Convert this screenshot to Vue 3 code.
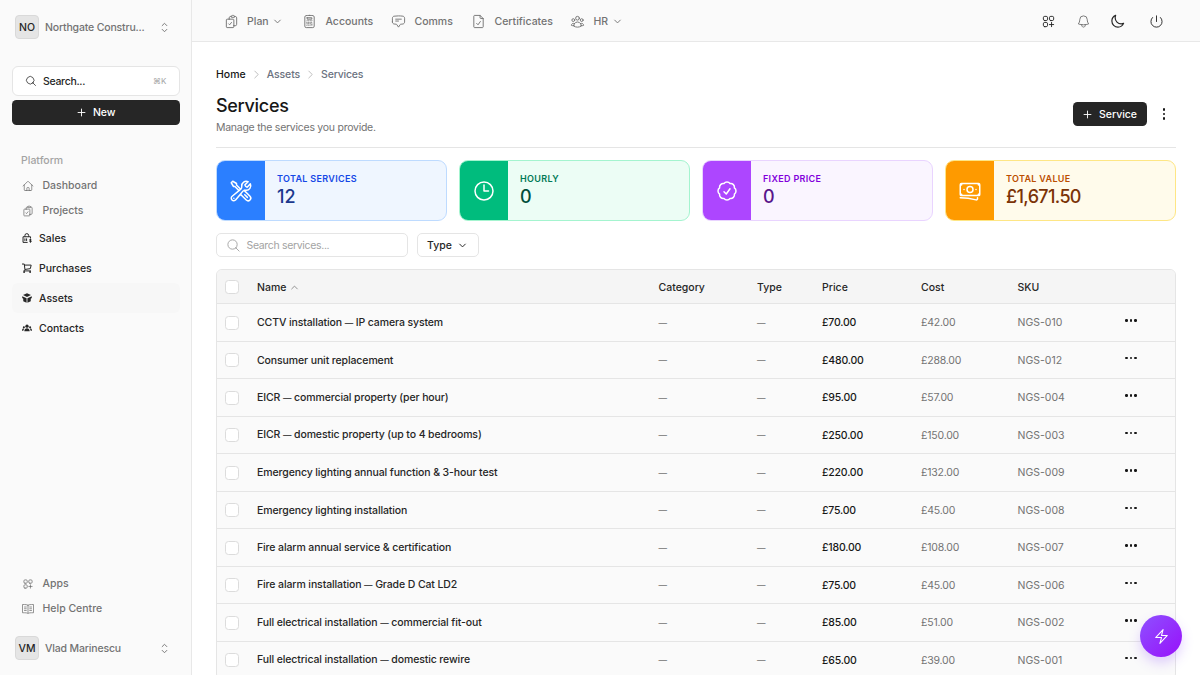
<template>
  <div class="app">
    <aside class="sidebar">
      <div class="profile team">
        <span class="avatar">NO</span>
        <span class="profile-name">Northgate Constru...</span>
        <svg class="icon updown" viewBox="0 0 24 24"><path :d="icons.upDown" /></svg>
      </div>

      <div class="side-search">
        <svg class="icon" viewBox="0 0 24 24"><path :d="icons.search" /></svg>
        <span class="side-search-text">Search...</span>
        <span class="kbd">⌘K</span>
      </div>
      <button class="btn-dark new-btn">
        <svg class="icon" viewBox="0 0 24 24"><path :d="icons.plus" /></svg>
        <span>New</span>
      </button>

      <div class="group-label">Platform</div>
      <nav class="links">
        <a v-for="link in platformLinks" :key="link.label" class="link">
          <svg class="icon" viewBox="0 0 24 24"><path :d="icons[link.icon]" /></svg>
          <span>{{ link.label }}</span>
        </a>
      </nav>

      <nav class="sections">
        <a v-for="item in sections" :key="item.label" :class="['section', { active: item.active }]">
          <svg v-if="item.icon === 'sales'" class="glyph" viewBox="0 0 24 24">
            <path class="line" d="M7 9V6a4.500 4.500 0 0 1 9 0V9M2.500 9h18v4M2.500 9v13.500h11M7 13v6M11 13v6" />
            <path class="line" d="M22.500 16.200c-.6-1.200-4.500-1.300-4.500.6 0 2 4.500.8 4.500 3 0 2-4 1.600-4.700.4M20.300 14v9" />
          </svg>
          <svg v-else-if="item.icon === 'cart'" class="glyph" viewBox="0 0 24 24">
            <path class="line" d="M0 2.500h5.500l1.500 13M6 5h16l-2 8.500L7 15.500M7 15.500l-2.500 3.500h17" />
            <circle cx="5" cy="21.500" r="2.300" /><circle cx="19.500" cy="21.500" r="2.300" />
          </svg>
          <svg v-else-if="item.icon === 'cube'" class="glyph" viewBox="0 0 24 24">
            <path d="M12 .5 2.500 5 12 9.500 21.500 5zM.5 7.500 11 12.700V23.500L3 19.500v-6L.5 12zM23.500 7.500 13 12.700V23.500L21 19.500v-6l2.500-1.500z" />
          </svg>
          <svg v-else class="glyph" viewBox="0 0 24 24">
            <circle cx="12" cy="7.500" r="4" /><circle cx="4.500" cy="10" r="2.500" /><circle cx="19.500" cy="10" r="2.500" />
            <path d="M5.500 20c0-9.500 13-9.500 13 0zM0 18.500c0-4.500 2-5.500 5.500-5-1.500 1.500-2.300 3-2.300 5zM24 18.500c0-4.500-2-5.500-5.500-5 1.500 1.500 2.300 3 2.300 5z" />
          </svg>
          <span>{{ item.label }}</span>
        </a>
      </nav>

      <nav class="links bottom-links">
        <a v-for="link in bottomLinks" :key="link.label" class="link">
          <svg class="icon" viewBox="0 0 24 24"><path :d="icons[link.icon]" /></svg>
          <span>{{ link.label }}</span>
        </a>
      </nav>
      <div class="profile">
        <span class="avatar">VM</span>
        <span class="profile-name">Vlad Marinescu</span>
        <svg class="icon updown" viewBox="0 0 24 24"><path :d="icons.upDown" /></svg>
      </div>
    </aside>

    <main class="main">
      <header class="topbar">
        <nav class="topnav">
          <a v-for="item in topNav" :key="item.label" :class="['top-item', item.icon]">
            <svg class="icon" viewBox="0 0 24 24"><path :d="icons[item.icon]" /></svg>
            <span>{{ item.label }}</span>
            <svg v-if="item.menu" class="chevron" viewBox="0 0 24 24"><path :d="icons.down" /></svg>
          </a>
        </nav>
        <div class="top-actions">
          <svg v-for="name in topActions" :key="name" :class="['icon', name]" viewBox="0 0 24 24"><path :d="icons[name]" /></svg>
        </div>
      </header>

      <div class="content">
        <div class="breadcrumbs">
          <span class="home-crumb">Home</span>
          <svg class="crumb-sep" viewBox="0 0 24 24"><path :d="icons.right" /></svg>
          <span>Assets</span>
          <svg class="crumb-sep" viewBox="0 0 24 24"><path :d="icons.right" /></svg>
          <span class="last-crumb">Services</span>
        </div>

        <div class="page-head">
          <div>
            <h1>Services</h1>
            <p>Manage the services you provide.</p>
          </div>
          <div class="head-actions">
            <button class="btn-dark service-btn">
              <svg class="icon" viewBox="0 0 24 24"><path :d="icons.plus" /></svg>
              <span>Service</span>
            </button>
            <span class="dots vertical"><i></i><i></i><i></i></span>
          </div>
        </div>

        <div class="stats">
          <div v-for="stat in stats" :key="stat.label" :class="['stat', stat.color]">
            <div class="stat-icon">
              <svg class="icon" viewBox="0 0 24 24"><path :d="icons[stat.icon]" /></svg>
            </div>
            <div class="stat-body">
              <div class="stat-label">{{ stat.label }}</div>
              <div class="stat-value">{{ stat.value }}</div>
            </div>
          </div>
        </div>

        <div class="filters">
          <div class="filter-search">
            <svg class="icon" viewBox="0 0 24 24"><path :d="icons.search" /></svg>
            <span>Search services...</span>
          </div>
          <button class="type-btn">
            <span>Type</span>
            <svg class="chevron" viewBox="0 0 24 24"><path :d="icons.down" /></svg>
          </button>
        </div>

        <div class="table">
          <div class="row head">
            <span class="check"></span>
            <span class="name-head">Name <svg class="chevron" viewBox="0 0 24 24"><path :d="icons.up" /></svg></span>
            <span>Category</span>
            <span>Type</span>
            <span>Price</span>
            <span>Cost</span>
            <span>SKU</span>
            <span></span>
          </div>
          <div v-for="service in services" :key="service.sku" class="row">
            <span class="check"></span>
            <span class="name">
              <template v-for="(part, index) in service.name.split('—')" :key="index"><span v-if="index" class="dash">—</span>{{ part }}</template>
            </span>
            <span class="muted"><span class="dash">—</span></span>
            <span class="muted"><span class="dash">—</span></span>
            <span class="price">{{ service.price }}</span>
            <span class="muted cost">{{ service.cost }}</span>
            <span class="muted">{{ service.sku }}</span>
            <span class="dots"><i></i><i></i><i></i></span>
          </div>
        </div>
      </div>
    </main>

    <button class="fab">
      <svg class="icon" viewBox="0 0 24 24"><path :d="icons.bolt" /></svg>
    </button>
  </div>
</template>

<script setup>
const icons = {
  search: 'm21 21-5.197-5.197m0 0A7.5 7.5 0 1 0 5.196 5.196a7.5 7.5 0 0 0 10.607 10.607Z',
  plus: 'M12 4.5v15m7.5-7.5h-15',
  upDown: 'M8.25 15 12 18.75 15.75 15m-7.5-6L12 5.25 15.75 9',
  up: 'm4.5 15.75 7.5-7.5 7.5 7.5',
  down: 'm19.5 8.25-7.5 7.5-7.5-7.5',
  right: 'm8.25 4.5 7.5 7.5-7.5 7.5',
  home: 'm2.25 12 8.954-8.955c.44-.439 1.152-.439 1.591 0L21.75 12M4.5 9.75v10.125c0 .621.504 1.125 1.125 1.125H9.75v-4.875c0-.621.504-1.125 1.125-1.125h2.25c.621 0 1.125.504 1.125 1.125V21h4.125c.621 0 1.125-.504 1.125-1.125V9.75M8.25 21h8.25',
  clipboard: 'M11.35 3.836c-.065.21-.1.433-.1.664 0 .414.336.75.75.75h4.5a.75.75 0 0 0 .75-.75 2.25 2.25 0 0 0-.1-.664m-5.8 0A2.251 2.251 0 0 1 13.5 2.25H15c1.012 0 1.867.668 2.15 1.586m-5.8 0c-.376.023-.75.05-1.124.08C9.095 4.01 8.25 4.973 8.25 6.108V8.25m8.9-4.414c.376.023.75.05 1.124.08 1.131.094 1.976 1.057 1.976 2.192V16.5A2.25 2.25 0 0 1 18 18.75h-2.25m-7.5-10.5H4.875c-.621 0-1.125.504-1.125 1.125v11.25c0 .621.504 1.125 1.125 1.125h9.75c.621 0 1.125-.504 1.125-1.125V18.75m-7.5-10.5h6.375c.621 0 1.125.504 1.125 1.125v9.375m-8.25-3 1.5 1.5 3-3.75',
  calculator: 'M15.75 15.75V18m-7.5-6.75h.008v.008H8.25v-.008Zm0 2.25h.008v.008H8.25V13.5Zm0 2.25h.008v.008H8.25v-.008Zm0 2.25h.008v.008H8.25V18Zm2.498-6.75h.007v.008h-.007v-.008Zm0 2.25h.007v.008h-.007V13.5Zm0 2.25h.007v.008h-.007v-.008Zm0 2.25h.007v.008h-.007V18Zm2.504-6.75h.008v.008h-.008v-.008Zm0 2.25h.008v.008h-.008V13.5Zm0 2.25h.008v.008h-.008v-.008Zm0 2.25h.008v.008h-.008V18Zm2.498-6.75h.008v.008h-.008v-.008Zm0 2.25h.008v.008h-.008V13.5ZM8.25 6h7.5v2.25h-7.5V6ZM12 2.25c-1.892 0-3.758.11-5.593.322C5.307 2.7 4.5 3.65 4.5 4.757V19.5a2.25 2.25 0 0 0 2.25 2.25h10.5a2.25 2.25 0 0 0 2.25-2.25V4.757c0-1.108-.806-2.057-1.907-2.185A48.507 48.507 0 0 0 12 2.25Z',
  chat: 'M7.5 8.25h9m-9 3H12m-9.75 1.51c0 1.6 1.123 2.994 2.707 3.227 1.129.166 2.27.293 3.423.379.35.026.67.21.865.501L12 21l2.755-4.133a1.14 1.14 0 0 1 .865-.501 48.172 48.172 0 0 0 3.423-.379c1.584-.233 2.707-1.626 2.707-3.228V6.741c0-1.602-1.123-2.995-2.707-3.228A48.394 48.394 0 0 0 12 3c-2.392 0-4.744.175-7.043.513C3.373 3.746 2.25 5.14 2.25 6.741v6.018Z',
  document: 'M14.5 2.25H5.625c-.621 0-1.125.504-1.125 1.125v17.25c0 .621.504 1.125 1.125 1.125h12.75c.621 0 1.125-.504 1.125-1.125V7.25l-5-5v3.875c0 .621.504 1.125 1.125 1.125H19.5M9 15l2.25 2.25L15 12',
  group: 'M18 18.72a9.094 9.094 0 0 0 3.741-.479 3 3 0 0 0-4.682-2.72m.94 3.198.001.031c0 .225-.012.447-.037.666A11.944 11.944 0 0 1 12 21c-2.17 0-4.207-.576-5.963-1.584A6.062 6.062 0 0 1 6 18.719m12 0a5.971 5.971 0 0 0-.941-3.197m0 0A5.995 5.995 0 0 0 12 12.75a5.995 5.995 0 0 0-5.058 2.772m0 0a3 3 0 0 0-4.681 2.72 8.986 8.986 0 0 0 3.74.477m.94-3.197a5.971 5.971 0 0 0-.94 3.197M15 6.75a3 3 0 1 1-6 0 3 3 0 0 1 6 0Zm6 3a2.25 2.25 0 1 1-4.5 0 2.25 2.25 0 0 1 4.5 0Zm-13.5 0a2.25 2.25 0 1 1-4.5 0 2.25 2.25 0 0 1 4.5 0Z',
  apps: 'M13.5 16.875h3.375m0 0h3.375m-3.375 0V13.5m0 3.375v3.375M6 10.5h2.25a2.25 2.25 0 0 0 2.25-2.25V6a2.25 2.25 0 0 0-2.25-2.25H6A2.25 2.25 0 0 0 3.75 6v2.25A2.25 2.25 0 0 0 6 10.5Zm0 9.75h2.25A2.25 2.25 0 0 0 10.5 18v-2.25a2.25 2.25 0 0 0-2.25-2.25H6a2.25 2.25 0 0 0-2.25 2.25V18A2.25 2.25 0 0 0 6 20.25Zm9.75-9.75H18a2.25 2.25 0 0 0 2.25-2.25V6A2.25 2.25 0 0 0 18 3.75h-2.25A2.25 2.25 0 0 0 13.5 6v2.25a2.25 2.25 0 0 0 2.25 2.25Z',
  book: 'M12 4.5C10.5 3 7 3 1 3v16.5c6 0 9.500 0 11 1.500C13.500 19.500 17 19.500 23 19.500V3c-6 0-9.500 0-11 1.500Zm0 0v16M5 8H8.500M5 11.500H8.500M5 15H8.500M15.500 8H19M15.500 11.500H19M15.500 15H19',
  bell: 'M14.857 17.082a23.848 23.848 0 0 0 5.454-1.31A8.967 8.967 0 0 1 18 9.75V9A6 6 0 0 0 6 9v.75a8.967 8.967 0 0 1-2.312 6.022c1.733.64 3.56 1.085 5.455 1.31m5.714 0a24.255 24.255 0 0 1-5.714 0m5.714 0a3 3 0 1 1-5.714 0',
  moon: 'M21.752 15.002A9.72 9.72 0 0 1 18 15.75c-5.385 0-9.75-4.365-9.75-9.75 0-1.33.266-2.597.748-3.752A9.753 9.753 0 0 0 3 11.25C3 16.635 7.365 21 12.75 21a9.753 9.753 0 0 0 9.002-5.998Z',
  power: 'M5.636 5.636a9 9 0 1 0 12.728 0M12 3v9',
  tools: 'M11.42 15.17 17.25 21A2.652 2.652 0 0 0 21 17.25l-5.877-5.877M11.42 15.17l2.496-3.03c.317-.384.74-.626 1.208-.766M11.42 15.17l-4.655 5.653a2.548 2.548 0 1 1-3.586-3.586l6.837-5.63m5.108-.233c.55-.164 1.163-.188 1.743-.14a4.5 4.5 0 0 0 4.486-6.336l-3.276 3.277a3.004 3.004 0 0 1-2.25-2.25l3.276-3.276a4.5 4.5 0 0 0-6.336 4.486c.091 1.076-.071 2.264-.904 2.95l-.102.085m-1.745 1.437L5.909 7.5H4.5L2.25 3.75l1.5-1.5L7.5 4.5v1.409l4.26 4.26m-1.745 1.437 1.745-1.437m6.615 8.206L15.75 15.75M4.867 19.125h.008v.008h-.008v-.008Z',
  clock: 'M12 6v6h4.5m4.5 0a9 9 0 1 1-18 0 9 9 0 0 1 18 0Z',
  badge: 'M9 12.75 11.25 15 15 9.75M21 12c0 1.268-.63 2.39-1.593 3.068a3.745 3.745 0 0 1-1.043 3.296 3.745 3.745 0 0 1-3.296 1.043A3.745 3.745 0 0 1 12 21c-1.268 0-2.39-.63-3.068-1.593a3.746 3.746 0 0 1-3.296-1.043 3.745 3.745 0 0 1-1.043-3.296A3.745 3.745 0 0 1 3 12c0-1.268.63-2.39 1.593-3.068a3.745 3.745 0 0 1 1.043-3.296 3.746 3.746 0 0 1 3.296-1.043A3.746 3.746 0 0 1 12 3c1.268 0 2.39.63 3.068 1.593a3.746 3.746 0 0 1 3.296 1.043 3.746 3.746 0 0 1 1.043 3.296A3.745 3.745 0 0 1 21 12Z',
  banknotes: 'M2.25 18.75a60.07 60.07 0 0 1 15.797 2.101c.727.198 1.453-.342 1.453-1.096V18.75M3.75 4.5v.75A.75.75 0 0 1 3 6h-.75m0 0v-.375c0-.621.504-1.125 1.125-1.125H20.25M2.25 6v9m18-10.5v.75c0 .414.336.75.75.75h.75m-1.5-1.5h.375c.621 0 1.125.504 1.125 1.125v9.75c0 .621-.504 1.125-1.125 1.125h-.375m1.5-1.5H21a.75.75 0 0 0-.75.75v.75m0 0H3.75m0 0h-.375a1.125 1.125 0 0 1-1.125-1.125V15m1.5 1.5v-.75A.75.75 0 0 0 3 15h-.75M15 10.5a3 3 0 1 1-6 0 3 3 0 0 1 6 0Zm3 0h.008v.008H18V10.5Zm-12 0h.008v.008H6V10.5Z',
  bolt: 'm3.75 13.5 10.5-11.25L12 10.5h8.25L9.75 21.75 12 13.5H3.75Z',
}

const platformLinks = [
  { label: 'Dashboard', icon: 'home' },
  { label: 'Projects', icon: 'clipboard' },
]

const sections = [
  { label: 'Sales', icon: 'sales' },
  { label: 'Purchases', icon: 'cart' },
  { label: 'Assets', icon: 'cube', active: true },
  { label: 'Contacts', icon: 'people' },
]

const bottomLinks = [
  { label: 'Apps', icon: 'apps' },
  { label: 'Help Centre', icon: 'book' },
]

const topNav = [
  { label: 'Plan', icon: 'clipboard', menu: true },
  { label: 'Accounts', icon: 'calculator' },
  { label: 'Comms', icon: 'chat' },
  { label: 'Certificates', icon: 'document' },
  { label: 'HR', icon: 'group', menu: true },
]

const topActions = ['apps', 'bell', 'moon', 'power']

const stats = [
  { label: 'TOTAL SERVICES', value: '12', icon: 'tools', color: 'blue' },
  { label: 'HOURLY', value: '0', icon: 'clock', color: 'green' },
  { label: 'FIXED PRICE', value: '0', icon: 'badge', color: 'purple' },
  { label: 'TOTAL VALUE', value: '£1,671.50', icon: 'banknotes', color: 'amber' },
]

const services = [
  { name: 'CCTV installation — IP camera system', price: '£70.00', cost: '£42.00', sku: 'NGS-010' },
  { name: 'Consumer unit replacement', price: '£480.00', cost: '£288.00', sku: 'NGS-012' },
  { name: 'EICR — commercial property (per hour)', price: '£95.00', cost: '£57.00', sku: 'NGS-004' },
  { name: 'EICR — domestic property (up to 4 bedrooms)', price: '£250.00', cost: '£150.00', sku: 'NGS-003' },
  { name: 'Emergency lighting annual function & 3-hour test', price: '£220.00', cost: '£132.00', sku: 'NGS-009' },
  { name: 'Emergency lighting installation', price: '£75.00', cost: '£45.00', sku: 'NGS-008' },
  { name: 'Fire alarm annual service & certification', price: '£180.00', cost: '£108.00', sku: 'NGS-007' },
  { name: 'Fire alarm installation — Grade D Cat LD2', price: '£75.00', cost: '£45.00', sku: 'NGS-006' },
  { name: 'Full electrical installation — commercial fit-out', price: '£85.00', cost: '£51.00', sku: 'NGS-002' },
  { name: 'Full electrical installation — domestic rewire', price: '£65.00', cost: '£39.00', sku: 'NGS-001' },
]
</script>

<style>
body {
  overflow: hidden;
}
</style>

<style scoped>
.app {
  display: flex;
  height: 675px;
  overflow: hidden;
  background: #fff;
  color: #262626;
  font: 500 10.5px/15px Inter, 'Liberation Sans', sans-serif;
}

button {
  border: 0;
  font: inherit;
  color: inherit;
}

.icon,
.chevron,
.crumb-sep {
  display: block;
  flex: none;
  width: 12px;
  height: 12px;
  fill: none;
  stroke: currentColor;
  stroke-width: 1.5;
  stroke-linecap: round;
  stroke-linejoin: round;
}

.sidebar {
  display: flex;
  flex-direction: column;
  flex: none;
  box-sizing: border-box;
  width: 192px;
  padding: 12px;
  border-right: 1px solid #e8e8e8;
  background: #fafafa;
}

.profile {
  display: flex;
  align-items: center;
  height: 30px;
  padding: 0 8px 0 3px;
  color: #737373;
}

.profile .updown {
  width: 15px;
  height: 15px;
  margin-right: -1px;
}

.team {
  margin-bottom: 24px;
}

.avatar {
  display: grid;
  place-items: center;
  box-sizing: border-box;
  width: 24px;
  height: 24px;
  margin-right: 6px;
  border: 1px solid #d9d9d9;
  border-radius: 4px;
  background: #e5e5e5;
  color: #262626;
}

.profile-name {
  flex: 1;
  letter-spacing: -0.16px;
}

.side-search {
  display: flex;
  align-items: center;
  box-sizing: border-box;
  width: 167.5px;
  height: 30px;
  margin-bottom: 4px;
  padding: 0 12px;
  border: 1px solid #e5e5e5;
  border-radius: 6px;
  background: #fff;
}

.side-search-text {
  flex: 1;
  margin-left: 6px;
  letter-spacing: -0.3px;
}

.kbd {
  color: #a3a3a3;
  font-size: 8px;
  font-weight: 400;
}

.btn-dark {
  display: flex;
  align-items: center;
  justify-content: center;
  height: 24px;
  padding: 0;
  border-radius: 4.5px;
  background: #262626;
  color: #fff;
}

.btn-dark .icon {
  width: 11px;
  height: 11px;
  stroke-width: 2;
}

.new-btn {
  flex: none;
  gap: 6px;
  width: 167.5px;
  height: 24.5px;
}

.group-label {
  margin: 28px 9px 5.5px;
  color: #a3a3a3;
  line-height: 15px;
}

.links {
  display: flex;
  flex-direction: column;
}

.link {
  display: flex;
  align-items: center;
  gap: 9px;
  height: 25px;
  padding-left: 9.5px;
  color: #737373;
}

.sections {
  display: flex;
  flex-direction: column;
}

.section {
  display: flex;
  align-items: center;
  gap: 7px;
  width: 158px;
  height: 30px;
  padding-left: 10px;
  border-radius: 6px;
}

.section.active {
  background: #f7f7f7;
}

.glyph {
  width: 10px;
  height: 10px;
  fill: #262626;
}

.glyph .line {
  fill: none;
  stroke: #262626;
  stroke-width: 2.4;
}

.bottom-links {
  margin-top: auto;
  margin-bottom: 12px;
}

.main {
  flex: 1;
  min-width: 0;
}

.topbar {
  display: flex;
  align-items: center;
  justify-content: space-between;
  box-sizing: border-box;
  height: 42px;
  padding: 1px 36px 0 31.5px;
  border-bottom: 1px solid #e8e8e8;
  background: #fafafa;
  color: #737373;
}

.topnav,
.top-item {
  display: flex;
  align-items: center;
}

.top-item .icon {
  width: 15px;
  height: 15px;
  margin-right: 8.5px;
}

.top-item .chevron {
  width: 9px;
  height: 9px;
  margin-left: 4.5px;
  stroke-width: 2.5;
}

.top-item.clipboard { width: 78.5px; }
.top-item.calculator { width: 89px; }
.top-item.chat { width: 80px; }
.top-item.document { width: 99px; }

.top-actions {
  display: flex;
  align-items: center;
  gap: 19.5px;
  color: #262626;
}

.top-actions .icon {
  width: 15px;
  height: 15px;
}

.top-actions .bell {
  color: #737373;
}

.top-actions .moon {
  margin-right: 4.5px;
  stroke-width: 1.9;
}

.content {
  padding: 24px 24px 0;
}

.breadcrumbs {
  display: flex;
  align-items: center;
  height: 16px;
  color: #6b7280;
  letter-spacing: -0.1px;
}

.home-crumb {
  color: #171717;
  letter-spacing: 0;
}

.last-crumb {
  letter-spacing: -0.2px;
}

.crumb-sep {
  width: 11px;
  height: 11px;
  margin: 0 5px;
  color: #a3a3a3;
}

.page-head {
  display: flex;
  justify-content: space-between;
  box-sizing: border-box;
  height: 66px;
  padding-top: 11px;
  border-bottom: 1px solid #e5e5e5;
}

h1 {
  margin: 0;
  color: #171717;
  font-size: 18px;
  font-weight: 450;
  line-height: 25px;
  letter-spacing: -0.3px;
}

.page-head p {
  margin: 2px 0 0;
  color: #737373;
  font-weight: 400;
  line-height: 16px;
  letter-spacing: -0.26px;
}

.head-actions {
  display: flex;
  align-items: center;
  align-self: flex-start;
  gap: 16px;
  margin-top: 9px;
  padding-right: 11px;
}

.service-btn {
  gap: 6px;
  width: 74px;
}

.dots {
  display: flex;
  align-items: center;
  gap: 2px;
}

.dots i {
  width: 2.5px;
  height: 2.5px;
  border-radius: 50%;
  background: #171717;
}

.dots.vertical {
  flex-direction: column;
  gap: 2px;
}

.stats {
  display: grid;
  grid-template-columns: repeat(4, 1fr);
  gap: 12px;
  margin-top: 12px;
}

.stat {
  display: flex;
  box-sizing: border-box;
  height: 61px;
  overflow: hidden;
  border: 1px solid;
  border-radius: 9px;
}

.stat-icon {
  display: grid;
  place-items: center;
  width: 48px;
  color: #fff;
}

.stat-icon .icon {
  width: 24px;
  height: 24px;
}

.stat-body {
  padding: 10px 12px 0;
}

.stat-label {
  font-size: 9px;
  font-weight: 600;
  line-height: 15px;
  letter-spacing: 0.33px;
}

.stat-value {
  font-size: 18px;
  font-weight: 450;
  line-height: 21px;
}

.blue { border-color: #bedbff; background: #eff6ff; }
.blue .stat-icon { background: #2b7fff; }
.blue .stat-label { color: #1447e6; }
.blue .stat-value { color: #1c398e; }

.green { border-color: #a4f4cf; background: #ecfdf5; }
.green .stat-icon { background: #00bc7d; }
.green .stat-label { color: #007a55; }
.green .stat-value { color: #004f3b; }

.purple { border-color: #e9d4ff; background: #faf5ff; }
.purple .stat-icon { background: #ad46ff; }
.purple .stat-label { color: #8200db; }
.purple .stat-value { color: #59168b; }

.amber { border-color: #fee685; background: #fffbeb; }
.amber .stat-icon { background: #fe9a00; }
.amber .stat-label { color: #bb4d00; }
.amber .stat-value { color: #7b3306; letter-spacing: -0.65px; }

.filters {
  display: flex;
  gap: 9px;
  margin: 12px 0;
}

.filter-search,
.type-btn {
  display: flex;
  align-items: center;
  box-sizing: border-box;
  height: 24px;
  border: 1px solid #e5e5e5;
  border-radius: 5px;
  background: #fff;
}

.filter-search {
  gap: 6px;
  width: 192px;
  padding-left: 8.5px;
  color: #a3a3a3;
  font-weight: 400;
  letter-spacing: -0.33px;
}

.filter-search .icon {
  width: 15px;
  height: 15px;
}

.type-btn {
  gap: 6px;
  width: 61.5px;
  padding: 0 9px;
}

.type-btn .chevron {
  width: 9px;
  height: 9px;
  stroke-width: 2.6;
}

.table {
  border: 1px solid #e5e5e5;
  border-radius: 6px;
  background: #fafafa;
  overflow: hidden;
}

.row {
  display: grid;
  grid-template-columns: 40px 401.5px 98.5px 65px 99px 96.5px 107.5px 1fr;
  align-items: center;
  box-sizing: border-box;
  height: 37.5px;
  padding-top: 1px;
  border-bottom: 1px solid #e5e5e5;
  white-space: nowrap;
}

.row.head {
  height: 34px;
  background: #f5f5f5;
}

.name-head {
  display: flex;
  align-items: center;
  gap: 4px;
}

.name-head .chevron {
  width: 9px;
  height: 9px;
  color: #737373;
  stroke-width: 2;
}

.name {
  letter-spacing: -0.11px;
}

.dash {
  font-size: 8.5px;
}

.check {
  box-sizing: border-box;
  width: 14px;
  height: 14px;
  margin-left: 8px;
  border: 1px solid #dcdcdc;
  border-radius: 3.5px;
  background: #fff;
}

.muted {
  color: #737373;
  font-weight: 400;
}

.price {
  color: #171717;
  letter-spacing: -0.2px;
}

.cost {
  letter-spacing: -0.2px;
}

.row .dots {
  padding-bottom: 5px;
}

.fab {
  position: absolute;
  left: 1140px;
  top: 615px;
  display: grid;
  place-items: center;
  width: 42px;
  height: 42px;
  padding: 0;
  border-radius: 50%;
  background: linear-gradient(135deg, #8e51ff, #9810fa);
  box-shadow: 0 6px 12px rgba(142, 81, 255, 0.25);
  color: #fff;
}

.fab .icon {
  width: 17px;
  height: 17px;
}
</style>
